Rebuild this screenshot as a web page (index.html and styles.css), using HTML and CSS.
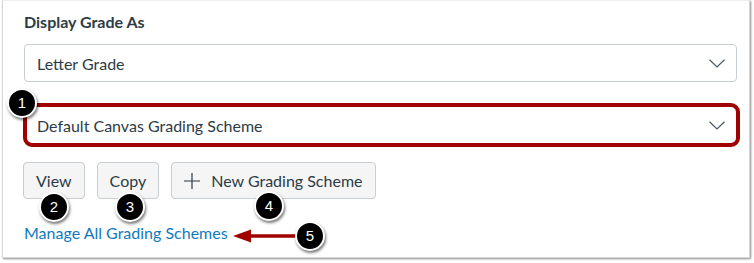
FILE: index.html
```html
<!DOCTYPE html>
<html>
<head>
<meta charset="utf-8">
<link rel="stylesheet" href="styles.css">
</head>
<body>
<div class="frame">
  <div class="panel">
    <div class="label">Display Grade As</div>
    <div class="select">
      <span>Letter Grade</span>
      <svg class="chev" width="16" height="9" viewBox="0 0 16 9"><path d="M0.5 0.8 L8 8 L15.5 0.8" fill="none" stroke="#4a5660" stroke-width="1.2"/></svg>
    </div>
    <div class="highlight">
      <div class="select inner">
        <span>Default Canvas Grading Scheme</span>
        <svg class="chev" width="16" height="9" viewBox="0 0 16 9"><path d="M0.5 0.8 L8 8 L15.5 0.8" fill="none" stroke="#4a5660" stroke-width="1.2"/></svg>
      </div>
    </div>
    <div class="buttons">
      <button class="btn">View</button>
      <button class="btn">Copy</button>
      <button class="btn"><svg class="plus" width="16" height="16" viewBox="0 0 16 16"><path d="M8 0 V16 M0 8 H16" stroke="#2d3b45" stroke-width="1.2"/></svg>New Grading Scheme</button>
    </div>
    <a class="link" href="#">Manage All Grading Schemes</a>
  </div>
  <svg class="arrow" width="70" height="16" viewBox="0 0 70 16"><path d="M16 8 H66" stroke="#a00000" stroke-width="3.5"/><path d="M0 8 L18 1.5 L18 14.5 Z" fill="#a00000"/></svg>
  <div class="badge b1">1</div>
  <div class="badge b2">2</div>
  <div class="badge b3">3</div>
  <div class="badge b4">4</div>
  <div class="badge b5">5</div>
</div>
</body>
</html>
```

FILE: styles.css
```css
html, body {
  margin: 0;
  padding: 0;
  background: #ffffff;
}
.frame {
  position: relative;
  width: 754px;
  height: 263px;
  font-family: Lato, "Liberation Sans", sans-serif;
  color: #2d3b45;
}
.panel {
  margin-left: 2px;
  width: 748px;
  height: 258px;
  box-sizing: border-box;
  border: 1px solid #d6d6d6;
  border-top: 1px solid #eeeeee;
  box-shadow: 1px 1px 2px rgba(0,0,0,0.45);
  padding: 11px 14px 0 21px;
  display: flex;
  flex-direction: column;
  align-items: flex-start;
}
.label {
  font-size: 16px;
  font-weight: bold;
  line-height: 20px;
  height: 20px;
}
.select {
  margin-top: 12px;
  width: 713px;
  height: 38px;
  box-sizing: border-box;
  border: 1px solid #c7cdd1;
  border-radius: 4px;
  display: flex;
  align-items: center;
  justify-content: space-between;
  padding: 0 11px 0 12px;
  font-size: 16px;
}
.chev {
  display: block;
}
.highlight {
  margin-top: 21px;
  margin-left: -1px;
  width: 717px;
  height: 44px;
  box-sizing: border-box;
  border: 4px solid #a00000;
  border-radius: 9px;
}
.select.inner {
  margin-top: 0;
  border: none;
  width: 100%;
  height: 100%;
  padding: 0 11px 0 10px;
}
.buttons {
  margin-top: 15px;
  margin-left: -1px;
  display: flex;
  gap: 12px;
}
.btn {
  height: 37px;
  box-sizing: border-box;
  border: 1px solid #c7cdd1;
  border-radius: 4px;
  background: #f5f5f5;
  color: #2d3b45;
  font-family: Lato, "Liberation Sans", sans-serif;
  font-size: 16px;
  padding: 0 12px;
  display: flex;
  align-items: center;
}
.plus {
  margin-right: 11px;
  display: block;
}
.link {
  margin-top: 24px;
  font-size: 16px;
  line-height: 20px;
  color: #1279bd;
  text-decoration: none;
}
.arrow {
  position: absolute;
  left: 233px;
  top: 228px;
}
.badge {
  position: absolute;
  width: 26px;
  height: 26px;
  border-radius: 50%;
  background: #000;
  border: 2px solid #fff;
  box-shadow: 1px 2px 3px rgba(0,0,0,0.55);
  color: #fff;
  font-family: "Liberation Sans", Arial, sans-serif;
  font-size: 15px;
  line-height: 26px;
  text-align: center;
}
.b1 { left: 7px; top: 88px; }
.b2 { left: 39px; top: 192px; }
.b3 { left: 115px; top: 192px; }
.b4 { left: 254px; top: 191px; }
.b5 { left: 295px; top: 221px; }
```
